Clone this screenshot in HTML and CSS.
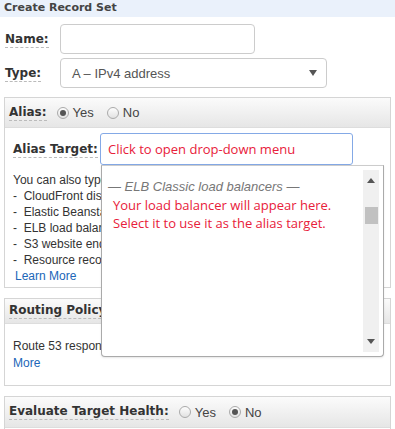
FILE: index.html
```html
<!DOCTYPE html>
<html>
<head>
<meta charset="utf-8">
<link rel="stylesheet" href="styles.css">
</head>
<body>
<div class="page">
  <div class="title">Create Record Set</div>

  <div class="field name-field">
    <span class="label"><span class="dash">Name:</span></span>
    <div class="input name-input"></div>
  </div>
  <div class="field type-field">
    <span class="label"><span class="dash">Type:</span></span>
    <div class="input select">
      <span class="select-text">A – IPv4 address</span>
      <span class="caret"></span>
    </div>
  </div>

  <div class="panel alias-panel">
    <div class="panel-head">
      <span class="head-label dash">Alias:</span>
      <span class="radio checked"></span><span class="radio-text">Yes</span>
      <span class="radio"></span><span class="radio-text">No</span>
    </div>
    <div class="panel-body alias-body">
      <div class="target-row">
        <span class="target-label"><span class="dash">Alias Target:</span></span>
        <div class="target-input">Click to open drop-down menu</div>
      </div>
      <div class="help">
        <div>You can also type the domain name for the following:</div>
        <div>-&nbsp; CloudFront distributions</div>
        <div>-&nbsp; Elastic Beanstalk environments</div>
        <div>-&nbsp; ELB load balancers</div>
        <div>-&nbsp; S3 website endpoints</div>
        <div>-&nbsp; Resource record sets in this hosted zone</div>
        <a class="link">Learn More</a>
      </div>
    </div>
  </div>

  <div class="panel routing-panel">
    <div class="panel-head short">
      <span class="head-label dash">Routing Policy:</span>
    </div>
    <div class="panel-body routing-body">
      <div class="clip">Route 53 responds to queries based only on the values in this record. Learn</div>
      <a class="link">More</a>
    </div>
  </div>

  <div class="panel eval-panel">
    <div class="panel-head eval-head">
      <span class="head-label dash">Evaluate Target Health:</span>
      <span class="radio"></span><span class="radio-text">Yes</span>
      <span class="radio checked"></span><span class="radio-text">No</span>
    </div>
  </div>

  <div class="dropdown">
    <div class="dd-content">
      <div class="dd-group">— ELB Classic load balancers —</div>
      <div class="dd-note">Your load balancer will appear here.<br>Select it to use it as the alias target.</div>
    </div>
    <div class="scrollbar">
      <span class="sb-up"></span>
      <span class="sb-thumb"></span>
      <span class="sb-down"></span>
    </div>
  </div>
</div>
</body>
</html>
```

FILE: styles.css
```css
html, body {
  margin: 0;
  padding: 0;
  background: #fff;
}
.page {
  position: relative;
  width: 395px;
  height: 429px;
  overflow: hidden;
  font-family: "Liberation Sans", Arial, sans-serif;
  font-size: 12px;
  color: #333;
}
.title {
  height: 17px;
  line-height: 16px;
  background: #eaf1fb;
  padding-left: 4px;
  font-family: "DejaVu Sans", Verdana, sans-serif;
  font-weight: bold;
  font-size: 11px;
  color: #444;
}
.field {
  display: flex;
  align-items: center;
  height: 30px;
}
.name-field { margin-top: 7px; }
.type-field { margin-top: 4px; }
.label {
  width: 55px;
  padding-left: 5px;
}
.dash {
  font-family: "DejaVu Sans", Verdana, sans-serif;
  font-weight: bold;
  font-size: 12px;
  color: #333;
  border-bottom: 1px dashed #bbb;
  padding-bottom: 1px;
}
.input {
  box-sizing: border-box;
  height: 30px;
  border: 1px solid #ccc;
  border-radius: 4px;
  background: #fff;
}
.name-input { width: 195px; }
.select {
  width: 267px;
  display: flex;
  align-items: center;
  justify-content: space-between;
  padding: 0 9px 0 11px;
  font-size: 13px;
  color: #555;
}
.caret {
  width: 0;
  height: 0;
  border-left: 4px solid transparent;
  border-right: 4px solid transparent;
  border-top: 6px solid #555;
}
.panel {
  margin: 0 4px;
  border: 1px solid #d5d5d5;
  overflow: hidden;
}
.alias-panel { margin-top: 9px; height: 189px; }
.routing-panel { margin-top: 10px; height: 86px; }
.eval-panel { margin-top: 10px; height: 40px; }
.panel-head {
  display: flex;
  align-items: center;
  height: 29px;
  padding-left: 4px;
  background: linear-gradient(#fbfbfb, #e6e6e6);
  border-bottom: 1px solid #ddd;
}
.panel-head.short { height: 24px; }
.eval-head { height: 30px; }
.head-label { margin-right: 10px; }
.radio {
  box-sizing: border-box;
  width: 12px;
  height: 12px;
  border: 1px solid #aaa;
  border-radius: 50%;
  background: linear-gradient(#fdfdfd, #e2e2e2);
  position: relative;
  margin-right: 4px;
}
.radio.checked::after {
  content: "";
  position: absolute;
  left: 2px;
  top: 2px;
  width: 6px;
  height: 6px;
  border-radius: 50%;
  background: #555;
}
.radio-text {
  font-size: 13px;
  color: #444;
  margin-right: 13px;
}
.alias-body { padding: 5px 0 0 8px; }
.target-row {
  display: flex;
  align-items: center;
  height: 32px;
}
.target-label {
  width: 87px;
  flex: none;
}
.target-input {
  box-sizing: border-box;
  width: 253px;
  height: 32px;
  border: 1px solid #84a9e6;
  border-radius: 3px;
  padding: 6px 0 0 7px;
  font-family: "Open Sans", sans-serif;
  font-size: 13px;
  color: #e8203a;
}
.help {
  margin-top: 7px;
  line-height: 16px;
  white-space: nowrap;
}
.link { color: #2066b8; display: block; padding-left: 2px; line-height: 17px; }
.routing-body {
  padding: 14px 0 0 8px;
  line-height: 16px;
  white-space: nowrap;
}
.clip {
  width: 360px;
  overflow: hidden;
}
.routing-body .link { padding-left: 0; line-height: 18px; }
.dropdown {
  position: absolute;
  left: 101px;
  top: 165px;
  width: 283px;
  height: 192px;
  box-sizing: border-box;
  border: 1px solid #aaa;
  border-top-color: #ccc;
  border-radius: 0 0 4px 4px;
  background: #fff;
  display: flex;
  box-shadow: 0 1px 2px rgba(0,0,0,0.1);
}
.dd-content {
  flex: 1;
  padding: 12px 0 0 6px;
}
.dd-group {
  font-style: italic;
  color: #777;
  font-size: 13px;
  line-height: 18px;
}
.dd-note {
  padding-left: 5px;
  font-family: "Open Sans", sans-serif;
  font-size: 13px;
  line-height: 18px;
  color: #e8203a;
}
.scrollbar {
  position: relative;
  width: 16px;
  margin: 4px 4px 4px 0;
  background: #f0f0f0;
}
.sb-up, .sb-down {
  position: absolute;
  left: 4px;
  width: 0;
  height: 0;
  border-left: 4px solid transparent;
  border-right: 4px solid transparent;
}
.sb-up { top: 8px; border-bottom: 5px solid #555; }
.sb-down { bottom: 8px; border-top: 5px solid #555; }
.sb-thumb {
  position: absolute;
  left: 2px;
  top: 37px;
  width: 13px;
  height: 17px;
  background: #c1c1c1;
}
```
